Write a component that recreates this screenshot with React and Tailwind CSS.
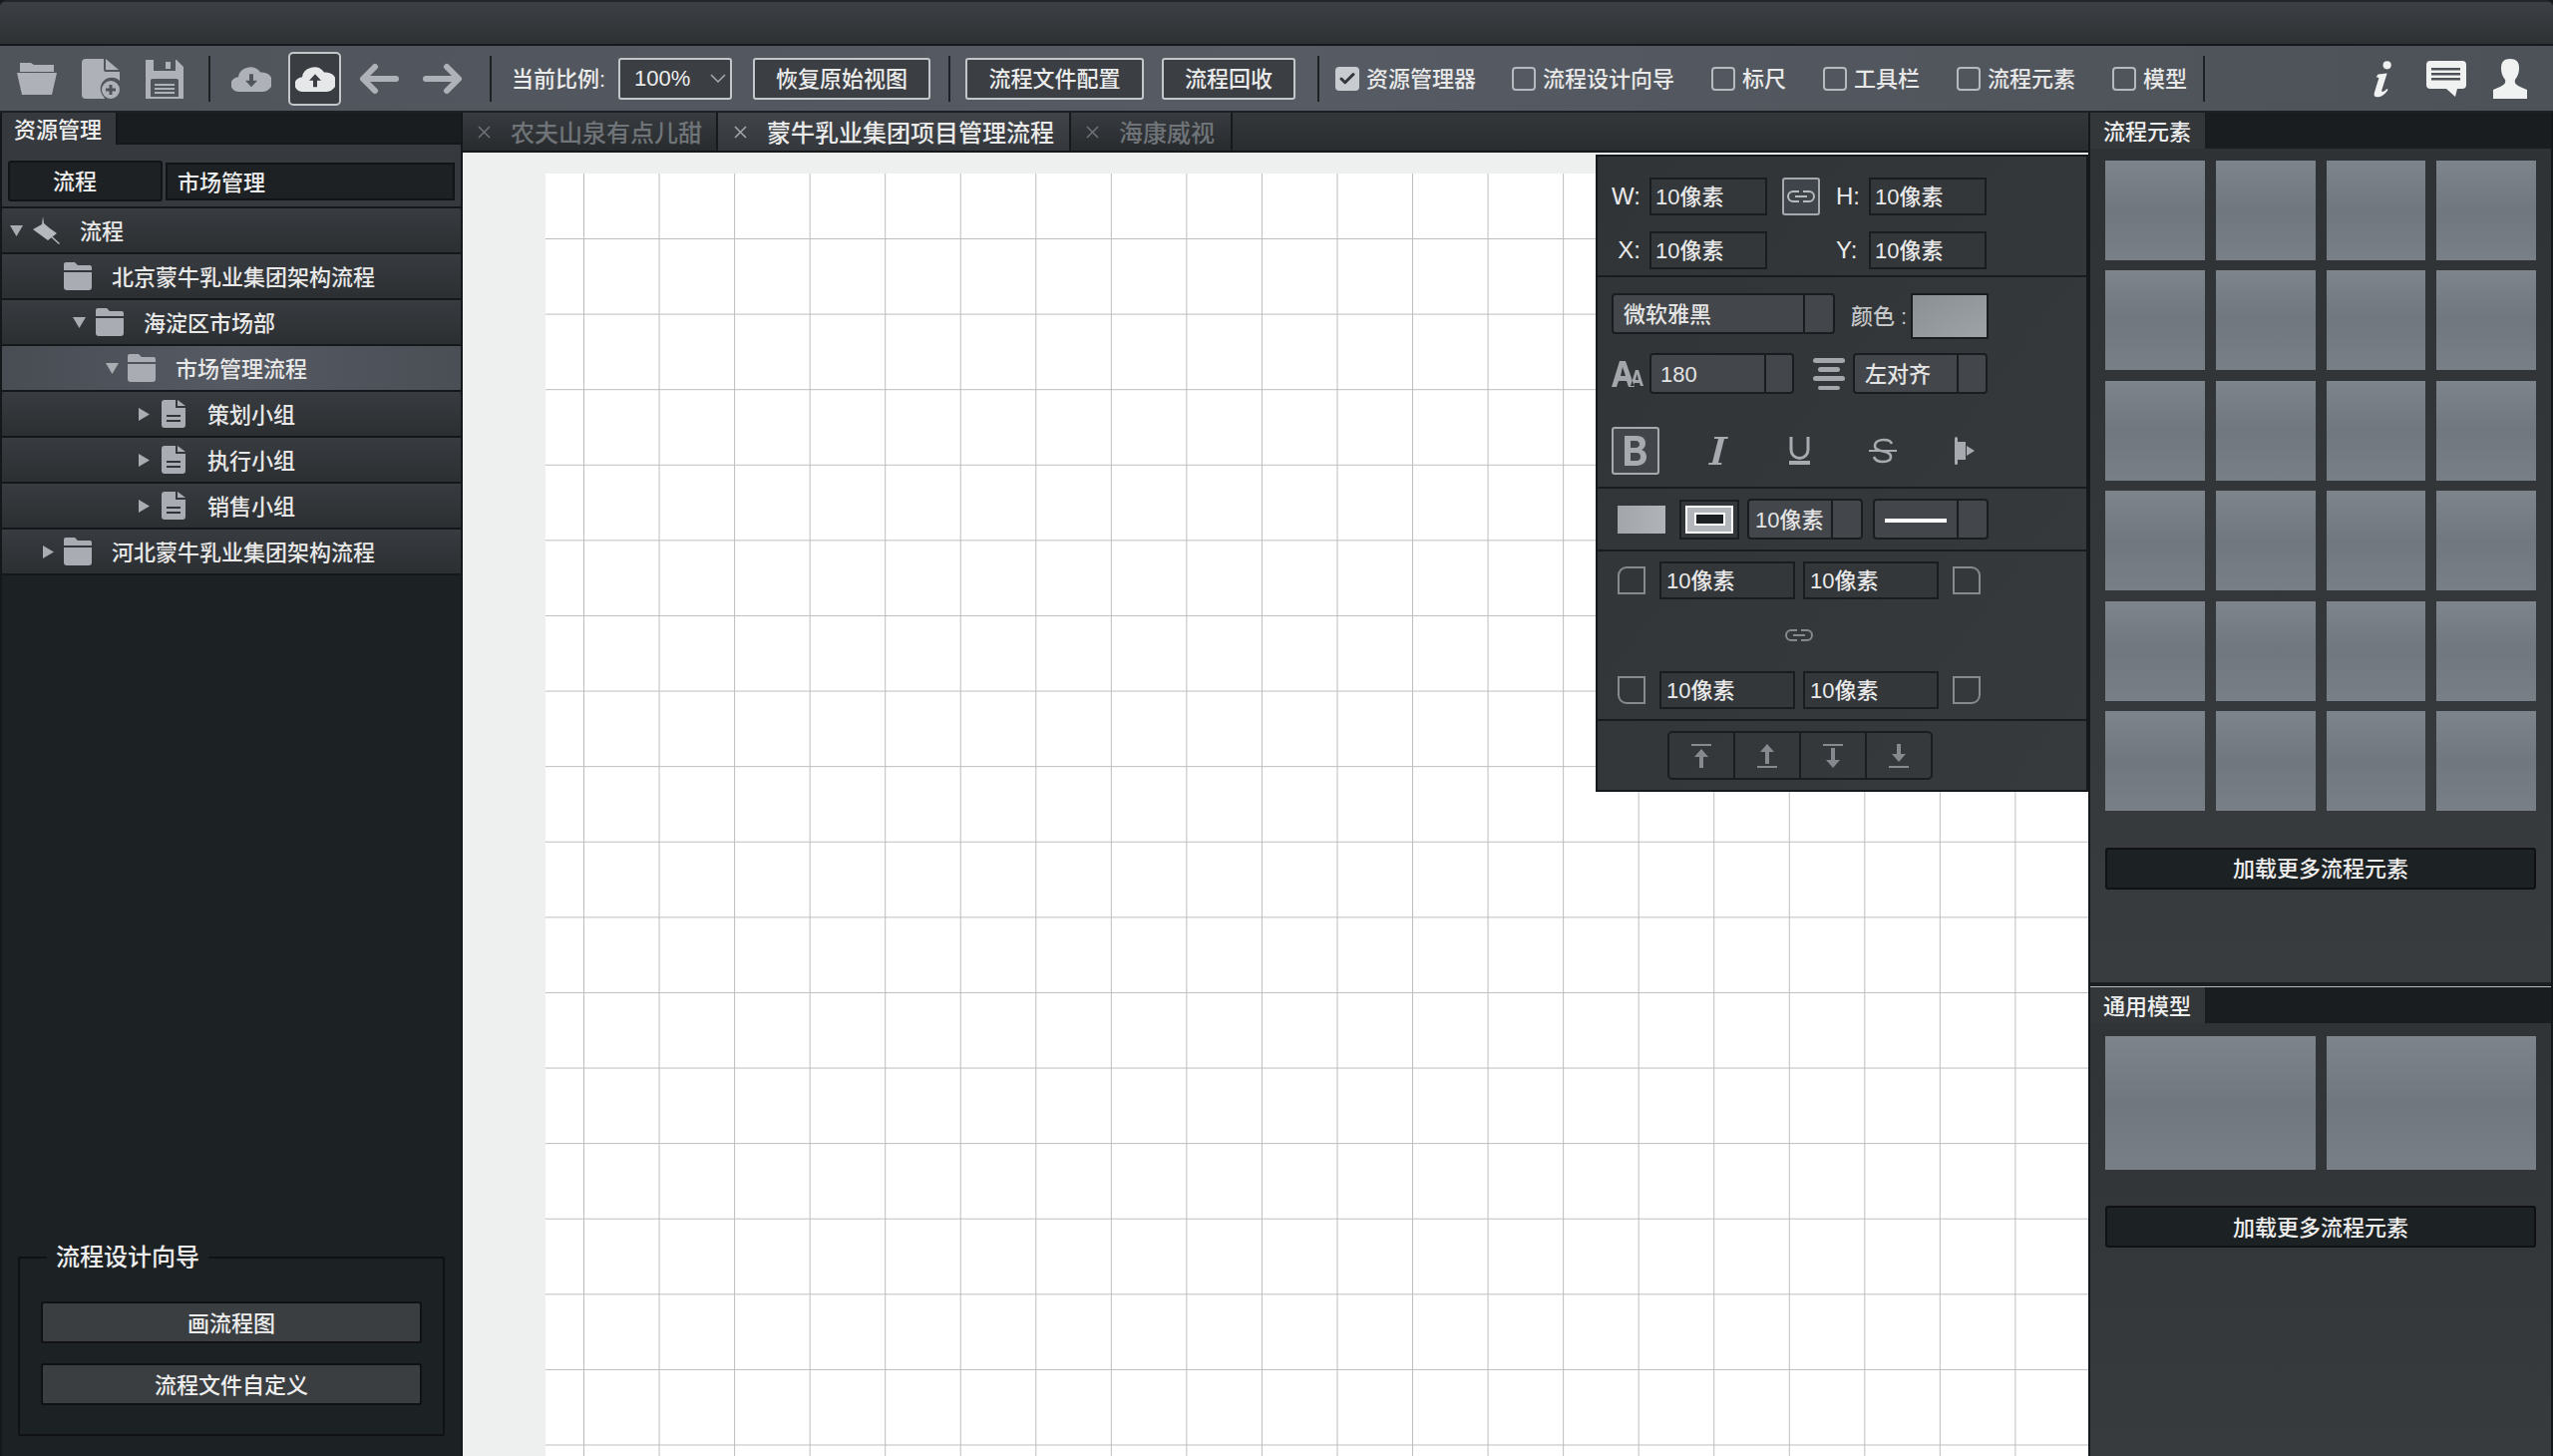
import { Check } from "lucide-react";

const FONT = "font-['Liberation_Sans','Noto_Sans_CJK_SC',sans-serif] font-medium";

function Sep({ className = "" }) {
  return <div className={"w-[2px] h-[46px] bg-[#1e2124] shrink-0 " + className} />;
}

function ToolButton({ children, className = "" }) {
  return (
    <div className={"h-[42px] pt-[2px] shrink-0 flex items-center justify-center rounded-[3px] border-2 border-[#c4c7ca] bg-[#3b3f44] text-[22px] text-[#ececec] " + className}>
      {children}
    </div>
  );
}

function CheckItem({ label, checked, className = "" }) {
  return (
    <div className={"flex items-center shrink-0 " + className}>
      {checked ? (
        <div className="w-[24px] h-[24px] rounded-[4px] bg-[#c8cbcf] flex items-center justify-center">
          <Check size={18} strokeWidth={4} className="text-[#33373b]" />
        </div>
      ) : (
        <div className="w-[24px] h-[24px] rounded-[4px] border-2 border-[#b6b9bd]" />
      )}
      <span className="ml-[7px] pt-[2px] text-[22px] text-[#e8e8e8] leading-none">{label}</span>
    </div>
  );
}

function LinkGlyph({ color = "#b4b7bb", w = 30, h = 12 }) {
  return (
    <svg width={w} height={h} viewBox="0 0 30 12" fill="none" stroke={color} strokeWidth="2">
      <path d="M13 1H7a5 5 0 0 0 0 10h6" />
      <path d="M17 1h6a5 5 0 0 1 0 10h-6" />
      <path d="M9 6h12" />
    </svg>
  );
}

function Toolbar() {
  return (
    <div className="h-[67px] shrink-0 flex items-center bg-linear-to-r from-[#4f545b] via-[#565b64] to-[#4d5258] border-b-2 border-[#1d2023]">
      <svg className="ml-[17px] shrink-0" width="40" height="32" viewBox="0 0 40 32" fill="#aeb1b7">
        <path d="M3 0h11l3 2h20v7H3z" />
        <path d="M0 10h40l-5 22H5z" />
      </svg>
      <svg className="ml-[25px] shrink-0" width="38" height="40" viewBox="0 0 38 40" fill="#aeb1b7">
        <path d="M4 0h18v11a2 2 0 0 0 2 2h14v9a11 11 0 0 0-16 16l1 2H4a4 4 0 0 1-4-4V4a4 4 0 0 1 4-4z" />
        <path d="M24 0l13 11H24z" />
        <path fillRule="evenodd" d="M29 22a9 9 0 1 1 0 18 9 9 0 0 1 0-18zm-1.500 4v3.500H24v3h3.500V36h3v-3.500H34v-3h-3.500V26z" />
      </svg>
      <svg className="ml-[26px] shrink-0" width="38" height="40" viewBox="0 0 38 40" fill="#aeb1b7">
        <path fillRule="evenodd" d="M0 1h8v11h22V1h1l7 7v32H0zM20 3h5v7h-5zM5 22a2 2 0 0 1 2-2h24a2 2 0 0 1 2 2v16H5zM9 25v2h20v-2zm0 4v2h20v-2zm0 4v2h20v-2z" />
      </svg>
      <Sep className="ml-[25px]" />
      <svg className="ml-[21px] shrink-0" width="40" height="26" viewBox="0 0 40 28" preserveAspectRatio="none" fill="#aeb1b7">
        <path fillRule="evenodd" d="M8 28a8 8 0 0 1-1-16A12 12 0 0 1 29 7a10.500 10.500 0 0 1 3 21zM18 9v7h-4l6 7 6-7h-4V9z" />
      </svg>
      <div className="ml-[17px] w-[53px] h-[54px] shrink-0 flex items-center justify-center rounded-[5px] border-2 border-[#c4c7ca] bg-[#3a3d42]">
        <svg width="40" height="26" viewBox="0 0 40 28" preserveAspectRatio="none" fill="#e6e7e9">
          <path fillRule="evenodd" d="M8 28a8 8 0 0 1-1-16A12 12 0 0 1 29 7a10.500 10.500 0 0 1 3 21zM18 23v-7h-4l6-7 6 7h-4v7z" />
        </svg>
      </div>
      <svg className="ml-[18px] shrink-0" width="40" height="32" viewBox="0 0 40 32" fill="none" stroke="#aeb1b7" strokeWidth="6" strokeLinecap="round" strokeLinejoin="round">
        <path d="M16 4L4 16l12 12M6 16h31" />
      </svg>
      <svg className="ml-[24px] shrink-0" width="40" height="32" viewBox="0 0 40 32" fill="none" stroke="#aeb1b7" strokeWidth="6" strokeLinecap="round" strokeLinejoin="round">
        <path d="M24 4l12 12-12 12M34 16H3" />
      </svg>
      <Sep className="ml-[27px]" />
      <span className="ml-[20px] pt-[2px] w-[94px] whitespace-nowrap text-[22px] text-[#ececec] shrink-0">当前比例:</span>
      <div className="ml-[13px] w-[114px] h-[42px] shrink-0 flex items-center rounded-[3px] border-2 border-[#c4c7ca] bg-[#3b3f44] text-[22px] text-[#ececec]">
        <span className="ml-[14px] w-[56px]">100%</span>
        <svg className="ml-[20px]" width="16" height="10" viewBox="0 0 16 10" fill="none" stroke="#a8abaf" strokeWidth="1.500">
          <path d="M1 1l7 7 7-7" />
        </svg>
      </div>
      <ToolButton className="ml-[21px] w-[178px]">恢复原始视图</ToolButton>
      <Sep className="ml-[18px]" />
      <ToolButton className="ml-[15px] w-[179px]">流程文件配置</ToolButton>
      <ToolButton className="ml-[18px] w-[134px]">流程回收</ToolButton>
      <Sep className="ml-[22px]" />
      <CheckItem className="ml-[16px]" checked label="资源管理器" />
      <CheckItem className="ml-[36px]" label="流程设计向导" />
      <CheckItem className="ml-[37px]" label="标尺" />
      <CheckItem className="ml-[37px]" label="工具栏" />
      <CheckItem className="ml-[37px]" label="流程元素" />
      <CheckItem className="ml-[37px]" label="模型" />
      <Sep className="ml-[16px]" />
      <svg className="ml-[169px] shrink-0" width="20" height="40" viewBox="0 0 22 40" fill="#f0f1f1">
        <circle cx="15" cy="5" r="4.500" />
        <path d="M5 15l10-1-6 19c0 2 2 2 6-2l1 1c-4 6-8 8-12 8-3 0-4-2-3-5l5-16-3-1z" />
      </svg>
      <svg className="ml-[33px] shrink-0" width="40" height="36" viewBox="0 0 40 36" fill="#f0f1f1">
        <path fillRule="evenodd" d="M4 0h32a4 4 0 0 1 4 4v20a4 4 0 0 1-4 4h-5l-2 8-9-8H4a4 4 0 0 1-4-4V4a4 4 0 0 1 4-4zM5 7v2.500h29V7zm0 5v2.500h29V12zm0 5v2.500h29V17z" />
      </svg>
      <svg className="ml-[27px] shrink-0" width="34" height="40" viewBox="0 0 34 40" fill="#f0f1f1">
        <path d="M17 0c6 0 9 3 9 9 0 6-2 9-4 12-1 3 1 5 5 7l7 3v9H0v-9l7-3c4-2 6-4 5-7-2-3-4-6-4-12C8 3 11 0 17 0z" />
      </svg>
    </div>
  );
}

function Caret({ open }) {
  return open ? (
    <svg width="13" height="11" viewBox="0 0 13 11" fill="#a9acb1"><path d="M0 0h13L6.500 11z" /></svg>
  ) : (
    <svg width="11" height="13" viewBox="0 0 11 13" fill="#a9acb1"><path d="M0 0l11 6.500L0 13z" /></svg>
  );
}

function FolderIcon() {
  return (
    <svg width="28" height="28" viewBox="0 0 28 28" fill="#a9acb3">
      <path d="M2 0h9l3 3h12a2 2 0 0 1 2 2v3H0V2a2 2 0 0 1 2-2z" />
      <path d="M0 10h28v15a3 3 0 0 1-3 3H3a3 3 0 0 1-3-3z" />
    </svg>
  );
}

function FileIcon() {
  return (
    <svg width="24" height="28" viewBox="0 0 24 28" fill="#a9acb3">
      <path fillRule="evenodd" d="M3 0h11v8h10v17a3 3 0 0 1-3 3H3a3 3 0 0 1-3-3V3a3 3 0 0 1 3-3zM5 15v2h14v-2zm0 5v2h14v-2z" />
      <path d="M16 0l8 6h-8z" />
    </svg>
  );
}

function PinIcon() {
  return (
    <svg width="28" height="28" viewBox="0 0 28 28" fill="#b5b8bd">
      <path d="M11 0l1 7 6 5 7 5-9 7L1 13l9-5z" />
      <path d="M17 19l1-1 10 9-1 1z" />
    </svg>
  );
}

function TreeRow({ pad, caret, icon, iconGap, labelGap = "ml-[20px]", label, active }) {
  return (
    <div className={"h-[46px] shrink-0 flex items-center border-b-2 border-[#15181a] " + (active ? "bg-linear-to-r from-[#484d54] via-[#555a63] to-[#4a4f56]" : "bg-linear-to-b from-[#383c40] to-[#2b2f32]")}>
      <div className={"flex items-center " + pad}>
        <div className="w-[13px] flex justify-center">{caret}</div>
        <div className={iconGap}>{icon}</div>
        <span className={"pt-[3px] text-[22px] leading-none text-[#e8e8e8] " + labelGap}>{label}</span>
      </div>
    </div>
  );
}

function LeftPanel() {
  return (
    <div className="w-[464px] shrink-0 flex flex-col bg-[#1c2124] border-l-2 border-r-2 border-[#15181a]">
      <div className="h-[32px] shrink-0 flex bg-[#1a1d20] border-b-2 border-[#15181a]">
        <div className="w-[116px] h-[32px] bg-[#36393d] border-r-2 border-[#15181a] text-[22px] leading-[36px] text-[#eee] pl-[12px]">资源管理</div>
      </div>
      <div className="h-[64px] shrink-0 flex bg-[#36393d] pt-[16px] pl-[6px] pr-[6px] border-b-2 border-[#15181a] items-start">
        <div className="w-[155px] h-[41px] pt-[2px] rounded-[3px] border-2 border-[#111416] bg-[#1d2124] text-[22px] text-[#eee] flex items-center pl-[43px]">流程</div>
        <div className="ml-[3px] w-[290px] h-[38px] pt-[2px] mt-[2px] border-2 border-[#111416] bg-[#1d2124] text-[22px] text-[#eee] flex items-center pl-[10px]">市场管理</div>
      </div>
      <TreeRow pad="pl-[8px]" caret={<Caret open />} icon={<PinIcon />} iconGap="ml-[9px]" label="流程" />
      <TreeRow pad="pl-[47px]" caret={null} icon={<FolderIcon />} iconGap="ml-[2px]" label="北京蒙牛乳业集团架构流程" />
      <TreeRow pad="pl-[71px]" caret={<Caret open />} icon={<FolderIcon />} iconGap="ml-[10px]" label="海淀区市场部" />
      <TreeRow pad="pl-[104px]" caret={<Caret open />} icon={<FolderIcon />} iconGap="ml-[9px]" label="市场管理流程" active />
      <TreeRow pad="pl-[136px]" caret={<Caret />} icon={<FileIcon />} iconGap="ml-[11px]" labelGap="ml-[22px]" label="策划小组" />
      <TreeRow pad="pl-[136px]" caret={<Caret />} icon={<FileIcon />} iconGap="ml-[11px]" labelGap="ml-[22px]" label="执行小组" />
      <TreeRow pad="pl-[136px]" caret={<Caret />} icon={<FileIcon />} iconGap="ml-[11px]" labelGap="ml-[22px]" label="销售小组" />
      <TreeRow pad="pl-[40px]" caret={<Caret />} icon={<FolderIcon />} iconGap="ml-[9px]" label="河北蒙牛乳业集团架构流程" />
      <div className="flex-1" />
      <fieldset className="mx-[16px] mb-[20px] h-[193px] border-2 border-[#0f1113] rounded-[2px] px-[21px]">
        <legend className="ml-[6px] px-[9px] text-[24px] leading-[28px] text-[#eee]">流程设计向导</legend>
        <div className="mt-[30px] h-[42px] pt-[2px] rounded-[3px] border-2 border-[#0f1113] bg-[#3a3e41] text-[22px] text-[#eee] flex items-center justify-center">画流程图</div>
        <div className="mt-[20px] h-[42px] pt-[2px] rounded-[3px] border-2 border-[#0f1113] bg-[#3a3e41] text-[22px] text-[#eee] flex items-center justify-center">流程文件自定义</div>
      </fieldset>
    </div>
  );
}

function Tab({ label, active, className }) {
  return (
    <div className={"h-[38px] shrink-0 flex items-center border-r-2 border-[#17191c] text-[24px] " + (active ? "bg-linear-to-b from-[#41454a] to-[#34383c] text-[#eaeaea] " : "bg-linear-to-b from-[#383b3f] to-[#282b2e] text-[#6f7478] ") + className}>
      <svg width="13" height="13" viewBox="0 0 13 13" stroke={active ? "#a5a8ab" : "#6f7478"} strokeWidth="1.500" fill="none">
        <path d="M1 1l11 11M12 1L1 12" />
      </svg>
      <span className="ml-[20px] pt-[3px] leading-none">{label}</span>
    </div>
  );
}

function Input({ className = "", text = "10像素" }) {
  return <div className={"h-[38px] pt-[2px] shrink-0 border-2 border-[#1a1d20] bg-[#33373a] text-[22px] text-[#eaeaea] leading-none flex items-center " + className}>{text}</div>;
}

function SplitSelect({ children, left, right, className = "" }) {
  return (
    <div className={"h-[41px] shrink-0 flex rounded-[4px] border-2 border-[#1a1d20] bg-[#43474b] text-[22px] text-[#e4e4e4] leading-none " + className}>
      <div className={"flex items-center h-full pt-[2px] border-r-2 border-[#1a1d20] " + left}>{children}</div>
      <div className={right} />
    </div>
  );
}

function CornerIcon({ d }) {
  return (
    <svg className="shrink-0" width="28" height="28" viewBox="0 0 28 28" fill="none" stroke="#868a8f" strokeWidth="2">
      <path d={d} />
    </svg>
  );
}

function FloatingPanel() {
  return (
    <div className="absolute left-[1136px] top-[2px] w-[494px] h-[639px] border-2 border-[#16191b] bg-linear-to-br from-[#303437] to-[#363a3d] flex flex-col">
      <div className="h-[121px] shrink-0 border-b-2 border-[#191c1f] pt-[21px] text-[24px] text-[#eaeaea]">
        <div className="flex items-center">
          <span className="w-[43px] text-right">W:</span>
          <Input className="ml-[9px] w-[118px] pl-[4px]" />
          <div className="ml-[15px] w-[38px] h-[38px] rounded-[3px] border-2 border-[#a5a8ac] bg-[#40454b] flex items-center justify-center">
            <LinkGlyph color="#b8bbbe" />
          </div>
          <span className="w-[40px] text-right">H:</span>
          <Input className="ml-[9px] w-[118px] pl-[4px]" />
        </div>
        <div className="flex items-center mt-[16px]">
          <span className="w-[43px] text-right">X:</span>
          <Input className="ml-[9px] w-[118px] pl-[4px]" />
          <span className="ml-[53px] w-[40px] pl-[16px] text-left">Y:</span>
          <Input className="ml-[9px] w-[118px] pl-[4px]" />
        </div>
      </div>
      <div className="h-[212px] shrink-0 border-b-2 border-[#191c1f] pt-[16px] pl-[14px]">
        <div className="flex items-start">
          <SplitSelect className="w-[224px]" left="w-[192px] pl-[10px]" right="flex-1">微软雅黑</SplitSelect>
          <span className="ml-[16px] w-[52px] pt-[3px] whitespace-nowrap text-[22px] leading-[41px] text-[#c4c6c8]">颜色 :</span>
          <div className="ml-[8px] w-[78px] h-[46px] border-2 border-[#1a1d20] bg-linear-to-br from-[#8a8f94] to-[#9ea3a8]" />
        </div>
        <div className="flex items-center mt-[14px]">
          <svg className="shrink-0" width="32" height="26" viewBox="0 0 32 26" fill="#a3a6ab">
            <path fillRule="evenodd" d="M8 0h6l9 26h-6l-2-6H7l-2 6H0zm3 6L9 15h5zM24 9h3l5 16h-3l-1-3h-5l-1 3h-3zm1.500 4l-1.500 6h3z" />
          </svg>
          <SplitSelect className="ml-[6px] w-[145px]" left="w-[115px] pl-[9px]" right="flex-1">180</SplitSelect>
          <svg className="ml-[19px] shrink-0" width="32" height="32" viewBox="0 0 32 32" fill="#a3a6ab">
            <rect x="0" y="0" width="32" height="5" rx="2.500" />
            <rect x="5" y="9" width="22" height="5" rx="2.500" />
            <rect x="0" y="18" width="32" height="5" rx="2.500" />
            <rect x="5" y="28" width="22" height="4" rx="2" />
          </svg>
          <SplitSelect className="ml-[8px] w-[135px]" left="w-[104px] pl-[10px]" right="flex-1">左对齐</SplitSelect>
        </div>
        <div className="flex items-center mt-[33px]">
          <div className="w-[48px] h-[48px] shrink-0 rounded-[3px] border-2 border-[#a5a8ac] bg-[#42464b] flex items-center justify-center">
            <svg width="22" height="30" viewBox="0 0 22 30" fill="#a7aaaf">
              <path fillRule="evenodd" d="M0 0h12c6 0 9 3 9 7.500 0 3-1.500 5.500-4 6.500 3 1 5 3.500 5 7 0 5.500-4 9-10 9H0zm6 5v7h5c2.500 0 4-1.500 4-3.500S13.500 5 11 5zm0 12v8h6c2.500 0 4-1.500 4-4s-1.500-4-4-4z" />
            </svg>
          </div>
          <svg className="ml-[49px] shrink-0" width="20" height="28" viewBox="0 0 20 28" fill="#a7aaaf">
            <path d="M6 0h14l-.5 2h-3.500L10 26h3.500l-.5 2H0l.5-2H4L10 2H6z" />
          </svg>
          <svg className="ml-[61px] shrink-0" width="21" height="28" viewBox="0 0 21 28" fill="none" stroke="#a7aaaf">
            <path strokeWidth="3" d="M2 0v13a8.500 8.500 0 0 0 17 0V0" />
            <path strokeWidth="4" d="M0 26h21" />
          </svg>
          <svg className="ml-[59px] shrink-0" width="28" height="26" viewBox="0 0 28 26" fill="none" stroke="#a7aaaf" strokeWidth="2.500">
            <path d="M23 6c-1-3-4-4-8-4-5 0-9 2-9 6 0 8 16 3 16 11 0 3-3 5-8 5-5 0-8-2-9-5" />
            <path strokeWidth="2" d="M0 13h28" />
          </svg>
          <svg className="ml-[58px] shrink-0" width="20" height="28" viewBox="0 0 20 28" fill="#a7aaaf">
            <rect x="0" y="0" width="3" height="28" rx="1.500" />
            <path d="M3 5h8v18H3z" />
            <path d="M12 9l8 5-8 5z" />
          </svg>
        </div>
      </div>
      <div className="h-[63px] shrink-0 border-b-2 border-[#191c1f] flex items-center pl-[20px]">
        <div className="w-[48px] h-[28px] bg-linear-to-r from-[#a2a5a9] to-[#b0b3b8]" />
        <div className="ml-[14px] w-[60px] h-[40px] border-2 border-[#1a1d20] p-[4px]">
          <div className="w-full h-full border-2 border-white bg-[#b3b6ba] flex items-center justify-center">
            <div className="w-[31px] h-[13px] border-2 border-white bg-[#1d2023]" />
          </div>
        </div>
        <SplitSelect className="ml-[8px] w-[116px]" left="w-[84px] pl-[6px]" right="flex-1">10像素</SplitSelect>
        <SplitSelect className="ml-[10px] w-[116px]" left="w-[84px] pl-[10px]" right="flex-1">
          <div className="w-[62px] h-[4px] bg-white" />
        </SplitSelect>
      </div>
      <div className="h-[170px] shrink-0 border-b-2 border-[#191c1f] pl-[20px] pt-[10px]">
        <div className="flex items-center">
          <CornerIcon d="M1 27V9a8 8 0 0 1 8-8h18v26z" />
          <Input className="ml-[14px] w-[136px] pl-[5px]" />
          <Input className="ml-[8px] w-[136px] pl-[5px]" />
          <div className="ml-[14px]"><CornerIcon d="M1 1h18a8 8 0 0 1 8 8v18H1z" /></div>
        </div>
        <div className="h-[72px] flex items-center pl-[167px]">
          <LinkGlyph color="#868a8f" />
        </div>
        <div className="flex items-center">
          <CornerIcon d="M1 1v18a8 8 0 0 0 8 8h18V1z" />
          <Input className="ml-[14px] w-[136px] pl-[5px]" />
          <Input className="ml-[8px] w-[136px] pl-[5px]" />
          <div className="ml-[14px]"><CornerIcon d="M1 1h26v18a8 8 0 0 1-8 8H1z" /></div>
        </div>
      </div>
      <div className="flex-1 pl-[70px] pt-[10px]">
        <div className="w-[266px] h-[49px] rounded-[5px] border-2 border-[#1a1d20] flex">
          <div className="flex-1 flex items-center justify-center border-r-2 border-[#1a1d20]">
            <svg width="20" height="24" viewBox="0 0 20 24" fill="#868a8f"><path d="M0 0h20v2H0zM10 5l7 8h-5v11H8V13H3z" /></svg>
          </div>
          <div className="flex-1 flex items-center justify-center border-r-2 border-[#1a1d20]">
            <svg width="20" height="24" viewBox="0 0 20 24" fill="#868a8f"><path d="M10 0l7 8h-5v12H8V8H3zM0 22h20v2H0z" /></svg>
          </div>
          <div className="flex-1 flex items-center justify-center border-r-2 border-[#1a1d20]">
            <svg width="20" height="24" viewBox="0 0 20 24" fill="#868a8f"><path d="M0 0h20v2H0zM8 4h4v12h5l-7 8-7-8h5z" /></svg>
          </div>
          <div className="flex-1 flex items-center justify-center">
            <svg width="20" height="24" viewBox="0 0 20 24" fill="#868a8f"><path d="M8 0h4v10h5l-7 8-7-8h5zM0 22h20v2H0z" /></svg>
          </div>
        </div>
      </div>
    </div>
  );
}

function CenterPanel() {
  return (
    <div className="flex-1 min-w-0 flex flex-col">
      <div className="h-[40px] shrink-0 flex bg-linear-to-b from-[#33373a] to-[#2a2d30] border-b-2 border-[#15181a]">
        <Tab className="w-[256px] pl-[15px]" label="农夫山泉有点儿甜" />
        <Tab active className="w-[354px] pl-[16px]" label="蒙牛乳业集团项目管理流程" />
        <Tab className="w-[162px] pl-[15px]" label="海康威视" />
      </div>
      <div className="relative flex-1 bg-[#eef0ef] pt-[21px] pl-[83px] overflow-hidden">
        <div className="h-full bg-white bg-[linear-gradient(to_right,#bdbdbd_1px,transparent_1px),linear-gradient(to_bottom,#bdbdbd_1px,transparent_1px)] bg-[size:75.550px_75.600px] bg-[position:38px_65px]" />
        <FloatingPanel />
      </div>
    </div>
  );
}

function PanelTab({ label }) {
  return (
    <div className="h-[36px] shrink-0 flex bg-[#1a1d20]">
      <div className="w-[115px] h-full bg-[#33373a] text-[22px] leading-[39px] text-[#eee] pl-[13px]">{label}</div>
    </div>
  );
}

function LoadButton() {
  return (
    <div className="h-[42px] pt-[2px] rounded-[3px] border-2 border-[#0f1113] bg-[#1c2124] text-[22px] text-[#eee] flex items-center justify-center">加载更多流程元素</div>
  );
}

const tile = "bg-linear-to-b from-[#7e848b] via-[#71777e] to-[#797f86]";

function RightPanel() {
  return (
    <div className="w-[466px] shrink-0 flex flex-col border-l-2 border-r-2 border-[#15181a]">
      <div className="h-[876px] shrink-0 flex flex-col border-b-[4px] border-[#1c1f22] bg-linear-to-b from-[#2e3235] to-[#383c3f]">
        <PanelTab label="流程元素" />
        <div className="px-[15px] pt-[12px]">
          <div className="grid grid-cols-4 gap-x-[11px] gap-y-[10.400px]">
            {Array.from({ length: 24 }).map((_, i) => (
              <div key={i} className={"h-[100px] " + tile} />
            ))}
          </div>
          <div className="mt-[37px]"><LoadButton /></div>
        </div>
      </div>
      <div className="h-[1px] shrink-0 bg-[#b8babc]" />
      <div className="flex-1 flex flex-col bg-linear-to-b from-[#2f3336] to-[#373b3e]">
        <PanelTab label="通用模型" />
        <div className="px-[15px] pt-[13px]">
          <div className="grid grid-cols-2 gap-[11px]">
            <div className={"h-[134px] " + tile} />
            <div className={"h-[134px] " + tile} />
          </div>
          <div className="mt-[36px]"><LoadButton /></div>
        </div>
      </div>
    </div>
  );
}

export default function App() {
  return (
    <div className={"w-[2560px] h-[1460px] flex flex-col overflow-hidden bg-[#15181a] " + FONT}>
      <div className="h-[46px] shrink-0 bg-linear-to-b from-[#3c4044] to-[#2e3134] border-t-2 border-b-2 border-t-[#24272a] border-b-[#17191c] rounded-t-[6px]" />
      <Toolbar />
      <div className="flex-1 min-h-0 flex">
        <LeftPanel />
        <CenterPanel />
        <RightPanel />
      </div>
    </div>
  );
}
